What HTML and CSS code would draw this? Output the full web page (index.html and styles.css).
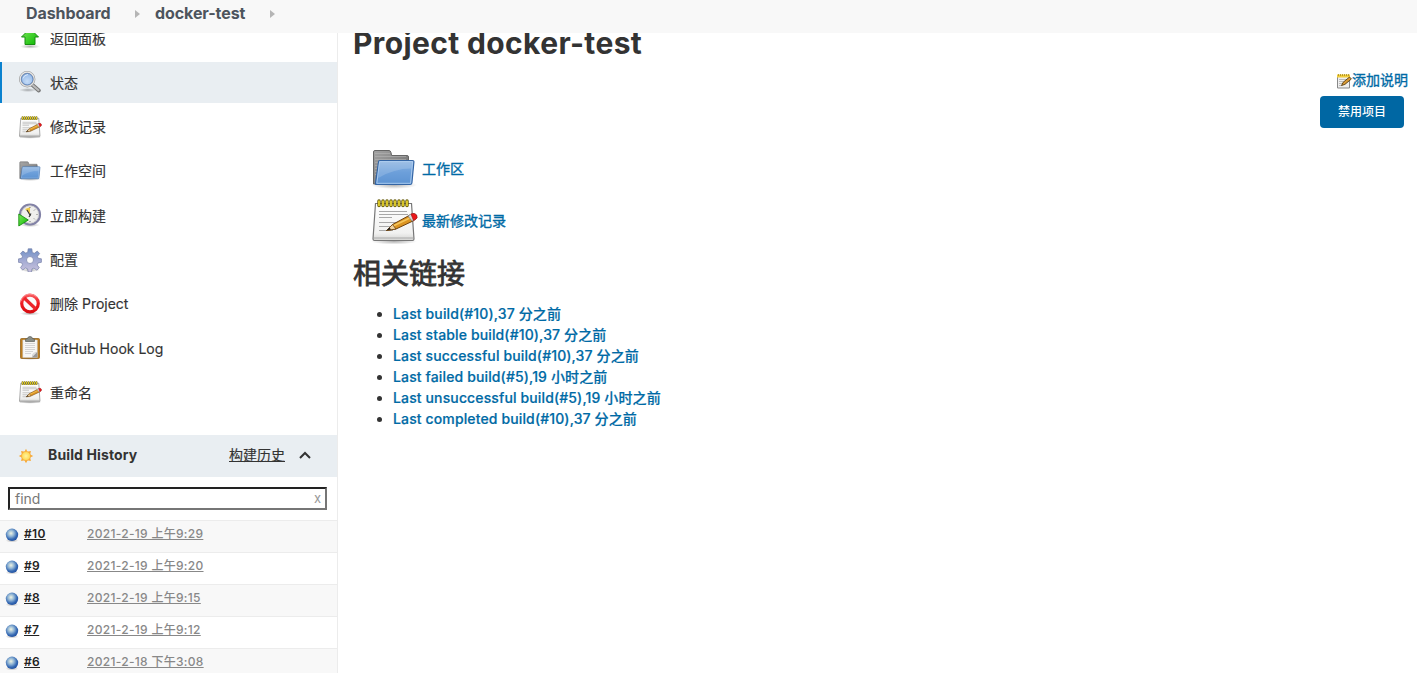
FILE: index.html
```html
<!DOCTYPE html>
<html lang="zh-CN">
<head>
<meta charset="utf-8">
<title>docker-test [Jenkins]</title>
<link rel="stylesheet" href="styles.css">
</head>
<body>
<svg class="defs" width="0" height="0" aria-hidden="true">
  <defs>
    <linearGradient id="paper" x1="0" y1="0" x2="0" y2="1"><stop offset="0" stop-color="#fff"/><stop offset=".8" stop-color="#f1f1f0"/><stop offset="1" stop-color="#d4d4d2"/></linearGradient>
    <linearGradient id="blue" x1="0" y1="0" x2="0" y2="1"><stop offset="0" stop-color="#8db4e1"/><stop offset=".5" stop-color="#6c9fda"/><stop offset="1" stop-color="#5d93d2"/></linearGradient>
    <linearGradient id="gray" x1="0" y1="0" x2="1" y2="1"><stop offset="0" stop-color="#a3a3a3"/><stop offset="1" stop-color="#686868"/></linearGradient>
    <linearGradient id="green" x1="0" y1="0" x2="1" y2="1"><stop offset="0" stop-color="#7ee95c"/><stop offset="1" stop-color="#08b800"/></linearGradient>
    <linearGradient id="gearfill" x1="0" y1="0" x2="0" y2="1"><stop offset="0" stop-color="#6f90c6"/><stop offset=".5" stop-color="#a3abd3"/><stop offset="1" stop-color="#cbc3de"/></linearGradient>
    <linearGradient id="red" x1="0" y1="0" x2="0" y2="1"><stop offset="0" stop-color="#f8585c"/><stop offset=".5" stop-color="#ef1a20"/><stop offset="1" stop-color="#d90d12"/></linearGradient>
    <radialGradient id="lens" cx=".5" cy=".65" r=".6"><stop offset="0" stop-color="#c5dcf7"/><stop offset="1" stop-color="#8fb5e6"/></radialGradient>
    <radialGradient id="ball" cx=".42" cy=".38" r=".64"><stop offset="0" stop-color="#eff4e2"/><stop offset=".4" stop-color="#8fb3d4"/><stop offset=".75" stop-color="#3569b3"/><stop offset="1" stop-color="#2453a2"/></radialGradient>
    <radialGradient id="sun"><stop offset="0" stop-color="#fff3a0"/><stop offset="1" stop-color="#ffd84a"/></radialGradient>
    <radialGradient id="shade"><stop offset="0" stop-color="#000" stop-opacity=".3"/><stop offset="1" stop-color="#000" stop-opacity="0"/></radialGradient>
    <symbol id="notepad" viewBox="0 0 48 48">
      <ellipse cx="24" cy="44.500" rx="23" ry="3" fill="url(#shade)"/>
      <path d="M5.500 6.500h36l2.500 35.500q0 1.500-1.500 1.500h-38q-1.500 0-1.500-1.500z" fill="url(#paper)" stroke="#777" stroke-width="1.200"/>
      <path d="M4 41h39" stroke="#aaa"/>
      <path d="M9 14.500h28M9 17.500h29M9 20.500h13M9 25.500h29M9 29.500h20M9 33.500h14" stroke="#a8a8a8" stroke-width="1.200"/>
      <path d="M9 4v4.500M13 4v4.500M17 4v4.500M21 4v4.500M25 4v4.500M29 4v4.500M33 4v4.500M37 4v4.500" stroke="#615500" stroke-width="3.400" stroke-linecap="round"/>
      <path d="M9 4v4.500M13 4v4.500M17 4v4.500M21 4v4.500M25 4v4.500M29 4v4.500M33 4v4.500M37 4v4.500" stroke="#eeda30" stroke-width="1.700" stroke-linecap="round"/>
      <path d="M16.500 33.500l6-6L40 18l4 5.500-18 8.500z" fill="#dc9421" stroke="#6e410d"/>
      <path d="M23 29l19-9" stroke="#f5c65c" stroke-width="1.500"/>
      <path d="M16.500 33.500l6-6 3.500 4.500z" fill="#f0d3a1" stroke="#6e410d" stroke-width=".8"/>
      <path d="M16.500 33.500l3-3 1.500 2z" fill="#222"/>
      <path d="M38 19l3-2q4-1.500 5.500 1.200t-1 4.300L42 24z" fill="#d9d9d9" stroke="#777" stroke-width=".7"/>
      <path d="M41 17q4-1.500 5.500 1.200t-1 4.300l-2 .9z" fill="#eb171b" stroke="#a81414" stroke-width=".7"/>
    </symbol>
    <symbol id="folder" viewBox="0 0 48 48">
      <ellipse cx="24" cy="40" rx="23" ry="4" fill="url(#shade)"/>
      <path d="M3.500 39V7q0-1.500 1.500-1.500h14q1.500 0 2 2l.6 3H37q1.500 0 1.500 1.500v27z" fill="url(#gray)" stroke="#666"/>
      <path d="M5 8.500h15M5 11.500h31M5 14.500h31M5 17.500h3M5 20.500h3M5 23.500h3M5 26.500h2M5 29.500h2" stroke="#bbb" stroke-width=".8" opacity=".65"/>
      <path d="M8.500 17q0-1.500 1.500-1.500h32.500q1.500 0 1.400 1.500l-2 21q-.3 1.500-1.900 1.500H6.500q-1.300 0-1-1.500z" fill="url(#blue)" stroke="#3465a4" stroke-width="1.200"/>
      <path d="M9.600 16.600h33l-2 21.700H6.800z" fill="none" stroke="#b9d4f3" stroke-width=".8"/>
      <path d="M10 17h32l-.8 6.500q-17 0-33 9.500z" fill="#fff" opacity=".16"/>
    </symbol>
    <symbol id="arrow" viewBox="0 0 24 24"><ellipse cx="12" cy="20.500" rx="10" ry="2.200" fill="url(#shade)"/><path d="M12 2.500l8.500 8.500h-3.500v7.500H7V11H3.500z" fill="url(#green)" stroke="#188b12"/></symbol>
    <symbol id="search" viewBox="0 0 24 24"><ellipse cx="10" cy="20" rx="9" ry="2" fill="url(#shade)"/><path d="M14.500 15l6.300 5.500" stroke="#777" stroke-width="4" stroke-linecap="round"/><path d="M14.500 15l6 5.200" stroke="#bbb" stroke-width="2" stroke-linecap="round"/><circle cx="9.200" cy="9.200" r="7" fill="url(#lens)" stroke="#999" stroke-width="2.400"/><circle cx="9.200" cy="9.200" r="7" fill="none" stroke="#e7e7e7" stroke-width="1.200"/><circle cx="9.200" cy="9.200" r="5.700" fill="none" stroke="#5c84bf" stroke-width=".8"/><path d="M5 8.500q1-3.500 5-4" stroke="#d8e8fb" fill="none"/></symbol>
    <symbol id="clock" viewBox="0 0 24 24"><ellipse cx="12" cy="22" rx="10" ry="2" fill="url(#shade)"/><circle cx="12" cy="11.500" r="10" fill="#efefed" stroke="#8282a6" stroke-width="2.200"/><circle cx="12" cy="11.500" r="8.600" fill="none" stroke="#c9c9c9" stroke-width=".7"/><path d="M12 11.500V4.200L7 6z" fill="#eec948"/><path d="M12.500 13L9 7M11 14l2-3.500" stroke="#333" stroke-width="1.100"/><path d="M12 4v1M18.500 11.500h1M12 18v1M17 6.500l-1 1M16.800 16.300l-.8-.8" stroke="#777"/><path d="M.8 11v12l9.500-6z" fill="url(#green)" stroke="#1a8e11" stroke-width=".9"/></symbol>
    <symbol id="gear" viewBox="0 0 24 24"><ellipse cx="12" cy="22" rx="10" ry="2" fill="url(#shade)"/><path fill-rule="evenodd" d="M10.200.8h3.600l.5 3.600 2 .9 3-2.200 2.300 2.400-2.200 2.900.8 2 3.200.4v3.500l-3.300.6-.9 2 2.100 2.900-2.400 2.400-2.900-2.100-2 .8-.5 3.200h-3.300l-.6-3.200-2-.9-2.900 2-2.200-2.300 2-2.900-.8-2-3.300-.5v-3.400l3.300-.6.8-2-2-2.900 2.400-2.300 2.800 2 2-.8zM12 8.500a3.500 3.500 0 1 0 0 7 3.500 3.500 0 0 0 0-7z" fill="url(#gearfill)" stroke="#7580a8" stroke-width=".7"/></symbol>
    <symbol id="stop" viewBox="0 0 24 24"><ellipse cx="12" cy="21.500" rx="10" ry="2" fill="url(#shade)"/><circle cx="12" cy="11.500" r="8.300" fill="#fafafa" stroke="url(#red)" stroke-width="3.200"/><path d="M6.200 6l11.600 11" stroke="#ec252b" stroke-width="3.200"/><path d="M3 9q1.500-6 8-7 5 0 8 3" fill="none" stroke="#ff9b9d" stroke-width=".8"/></symbol>
    <symbol id="clipboard" viewBox="0 0 24 24"><ellipse cx="12" cy="22.300" rx="11" ry="1.700" fill="url(#shade)"/><rect x="2.500" y="2.500" width="19" height="20" rx="1" fill="#bd7d1e" stroke="#936421" stroke-width=".8"/><path d="M4.800 4h14.500v17.500H4.800z" fill="#f7f7f5" stroke="#ccc" stroke-width=".5"/><path d="M7 7.500h10M7 9.500h10M7 11.500h10M7 13.500h10M7 15.500h8M7 17.500h6" stroke="#d4d4d4"/><path d="M19.300 16v5.500h-5.500l1.400-4.200z" fill="#999"/><path d="M19.300 16l-5.500 5.500 1.300-4.500z" fill="#ddd"/><path d="M7.500 5.500V3.200l2-.7q.3-2 2.500-2t2.500 2l2 .7v2.300z" fill="#888d87" stroke="#5c605b" stroke-width=".7"/></symbol>
    <symbol id="orb" viewBox="0 0 14 16"><ellipse cx="7" cy="13.500" rx="6.500" ry="2" fill="url(#shade)"/><circle cx="7" cy="7.800" r="6.200" fill="url(#ball)"/></symbol>
    <symbol id="sunny" viewBox="0 0 16 16"><path d="M8 .8l1.300 3L12.900 3l-.8 3.400L15.200 8l-3.100 1.500.8 3.500-3.400-.8L8 15.200l-1.500-3-3.400.8.8-3.500L.8 8l3.100-1.600L3.100 3l3.500.8z" fill="#f9a72b"/><circle cx="8" cy="8" r="4.500" fill="url(#sun)" stroke="#f3a84a" stroke-width=".7"/></symbol>
    <symbol id="note-small" viewBox="0 0 16 16"><path d="M1.500 2.500h12v12.500h-12z" fill="#eee" stroke="#888"/><path d="M3 6.500h8M3 8.500h7M3 10.500h4M3 12.500h3" stroke="#bbb"/><path d="M1 1.500h13v3H1z" fill="#f3ce3c"/><path d="M2.500 1v2M4.500 1v2M6.500 1v2M8.500 1v2M10.500 1v2M12.500 1v2" stroke="#a98b1a" stroke-width=".8"/><path d="M5.500 12.500l1.700-3.200L13.500 4l1.900 2-6.500 5.400z" fill="#d99a34" stroke="#594016" stroke-width=".9"/></symbol>
  </defs>
</svg>

<header class="crumbs">
  <a class="crumb crumb-home">Dashboard</a>
  <svg class="crumb-sep" viewBox="0 0 5 8"><path d="M0 0l5 4-5 4z"/></svg>
  <a class="crumb crumb-job">docker-test</a>
  <svg class="crumb-sep" viewBox="0 0 5 8"><path d="M0 0l5 4-5 4z"/></svg>
</header>

<div class="page">
  <aside class="side">
    <nav class="tasks">
      <a class="task"><svg class="icon"><use href="#arrow"/></svg><span>返回面板</span></a>
      <a class="task active"><svg class="icon"><use href="#search"/></svg><span>状态</span></a>
      <a class="task"><svg class="icon"><use href="#notepad"/></svg><span>修改记录</span></a>
      <a class="task"><svg class="icon"><use href="#folder"/></svg><span>工作空间</span></a>
      <a class="task"><svg class="icon"><use href="#clock"/></svg><span>立即构建</span></a>
      <a class="task"><svg class="icon"><use href="#gear"/></svg><span>配置</span></a>
      <a class="task"><svg class="icon"><use href="#stop"/></svg><span>删除 Project</span></a>
      <a class="task"><svg class="icon"><use href="#clipboard"/></svg><span>GitHub Hook Log</span></a>
      <a class="task"><svg class="icon"><use href="#notepad"/></svg><span>重命名</span></a>
    </nav>
    <section class="history">
      <div class="history-head">
        <svg class="sun"><use href="#sunny"/></svg>
        <span class="history-title">Build History</span>
        <a class="trend">构建历史</a>
        <svg class="chevron" viewBox="0 0 12 8"><path d="M1 7l5-5 5 5"/></svg>
      </div>
      <div class="find"><span>find</span><span class="clear">x</span></div>
      <div class="builds">
        <div class="build"><svg class="orb"><use href="#orb"/></svg><a class="num">#10</a><a class="date">2021-2-19 上午9:29</a></div>
        <div class="build"><svg class="orb"><use href="#orb"/></svg><a class="num">#9</a><a class="date">2021-2-19 上午9:20</a></div>
        <div class="build"><svg class="orb"><use href="#orb"/></svg><a class="num">#8</a><a class="date">2021-2-19 上午9:15</a></div>
        <div class="build"><svg class="orb"><use href="#orb"/></svg><a class="num">#7</a><a class="date">2021-2-19 上午9:12</a></div>
        <div class="build"><svg class="orb"><use href="#orb"/></svg><a class="num">#6</a><a class="date">2021-2-18 下午3:08</a></div>
      </div>
    </section>
  </aside>

  <main class="main">
    <h1>Project docker-test</h1>
    <div class="actions">
      <a class="describe"><svg class="note"><use href="#note-small"/></svg><span>添加说明</span></a>
      <button class="disable">禁用项目</button>
    </div>
    <div class="shortcuts">
      <a class="shortcut"><svg class="big"><use href="#folder"/></svg><span>工作区</span></a>
      <a class="shortcut"><svg class="big"><use href="#notepad"/></svg><span>最新修改记录</span></a>
    </div>
    <h2>相关链接</h2>
    <ul class="links">
      <li><a>Last build(#10),37 分之前</a></li>
      <li><a>Last stable build(#10),37 分之前</a></li>
      <li><a>Last successful build(#10),37 分之前</a></li>
      <li><a>Last failed build(#5),19 小时之前</a></li>
      <li><a>Last unsuccessful build(#5),19 小时之前</a></li>
      <li><a>Last completed build(#10),37 分之前</a></li>
    </ul>
  </main>
</div>
</body>
</html>
```
FILE: styles.css
```css
* { box-sizing: border-box; }
body {
  margin: 0;
  height: 673px;
  overflow: hidden;
  background: #fff;
  color: #333;
  font: 14px/21px Inter, "Noto Sans CJK SC", sans-serif;
  white-space: nowrap;
}
svg { display: block; flex: none; }
.defs { position: absolute; }
.crumbs {
  display: flex;
  align-items: center;
  height: 33px;
  padding: 0 0 6px 26px;
  background: #f8f8f8;
  color: #4d545d;
  font-size: 16px;
  font-weight: 700;
  letter-spacing: -.08px;
}
.crumb-home { width: 109px; }
.crumb-job { width: 115px; }
.crumb-sep { width: 5px; height: 8px; fill: #b5b5b5; }
.crumb-sep + .crumb { margin-left: 15px; }
.page { display: flex; height: 640px; overflow: hidden; }
.side { width: 338px; flex: none; border-right: 1px solid #ececec; }
.tasks { display: grid; row-gap: 3.3px; margin-top: -15.45px; }
.task {
  display: flex;
  align-items: center;
  gap: 8px;
  height: 41px;
  padding-left: 18px;
}
.task.active {
  padding-left: 16px;
  border-left: 2px solid #0b82cf;
  background: #e9eef2;
}
.icon { width: 24px; height: 24px; }
.task span, .trend { -webkit-text-stroke: .15px; }
.history { margin-top: 21.75px; }
.history-head {
  display: flex;
  align-items: center;
  height: 42px;
  padding: 0 0 2px 18px;
  background: #e9eef2;
}
.sun { width: 16px; height: 16px; margin-top: 2px; }
.history-title { width: 181px; margin-left: 14px; font-weight: 700; letter-spacing: .12px; }
.trend { text-decoration: underline; }
.chevron {
  width: 12px;
  height: 8px;
  margin: 1px 0 0 14px;
  fill: none;
  stroke: #333;
  stroke-width: 2;
}
.find {
  display: flex;
  align-items: center;
  justify-content: space-between;
  height: 23px;
  margin: 10px 10px 10px 8px;
  padding: 0 4px 0 5px;
  border: 2px solid;
  border-color: #222 #767676 #767676 #222;
  color: #777;
}
.clear { font-size: 13px; color: #999; }
.build {
  display: flex;
  height: 32px;
  padding: 2px 0 0 5px;
  border-top: 1px solid #ececec;
  font-size: 12px;
}
.build:nth-child(odd) { background: #f8f8f8; }
.orb { width: 14px; height: 16px; margin-top: 4px; }
.num { width: 63px; margin-left: 5px; font-weight: 600; text-decoration: underline; color: #222; }
.num, .date { height: 21px; letter-spacing: .3px; }
.date { text-decoration: underline; color: #888; font-weight: 500; }
.main { flex: 1; padding: 0 9px 0 15px; }
h1 { margin: -9px 0 0; font-size: 30px; line-height: 38px; font-weight: 700; letter-spacing: .37px; }
.actions { display: flex; flex-direction: column; align-items: flex-end; margin-top: 7px; }
.describe { display: flex; align-items: center; color: #006aa5; -webkit-text-stroke: .35px; }
.note { width: 16px; height: 16px; margin-top: 2px; }
.disable {
  width: 84px;
  height: 32px;
  margin: 6px 4px 0 0;
  padding: 0;
  border: 0;
  border-radius: 4px;
  background: #0067a3;
  color: #fff;
  font: 500 12px/18px Inter, "Noto Sans CJK SC", sans-serif;
}
.shortcuts { display: grid; row-gap: 4px; margin: 17px 0 0 17px; }
.shortcut { display: flex; align-items: center; gap: 4px; height: 48px; color: #006aa5; -webkit-text-stroke: .35px; }
.shortcut span { padding-bottom: 2px; }
.big { width: 48px; height: 48px; }
h2 { margin: 8px 0 0; font-size: 28px; line-height: 42px; font-weight: 400; -webkit-text-stroke: .8px; }
.links { margin: 8px 0 0; padding-left: 40px; }
.links li { height: 21px; }
.links a { color: #006aa5; font-weight: 500; letter-spacing: .13px; -webkit-text-stroke: .2px; }
```
